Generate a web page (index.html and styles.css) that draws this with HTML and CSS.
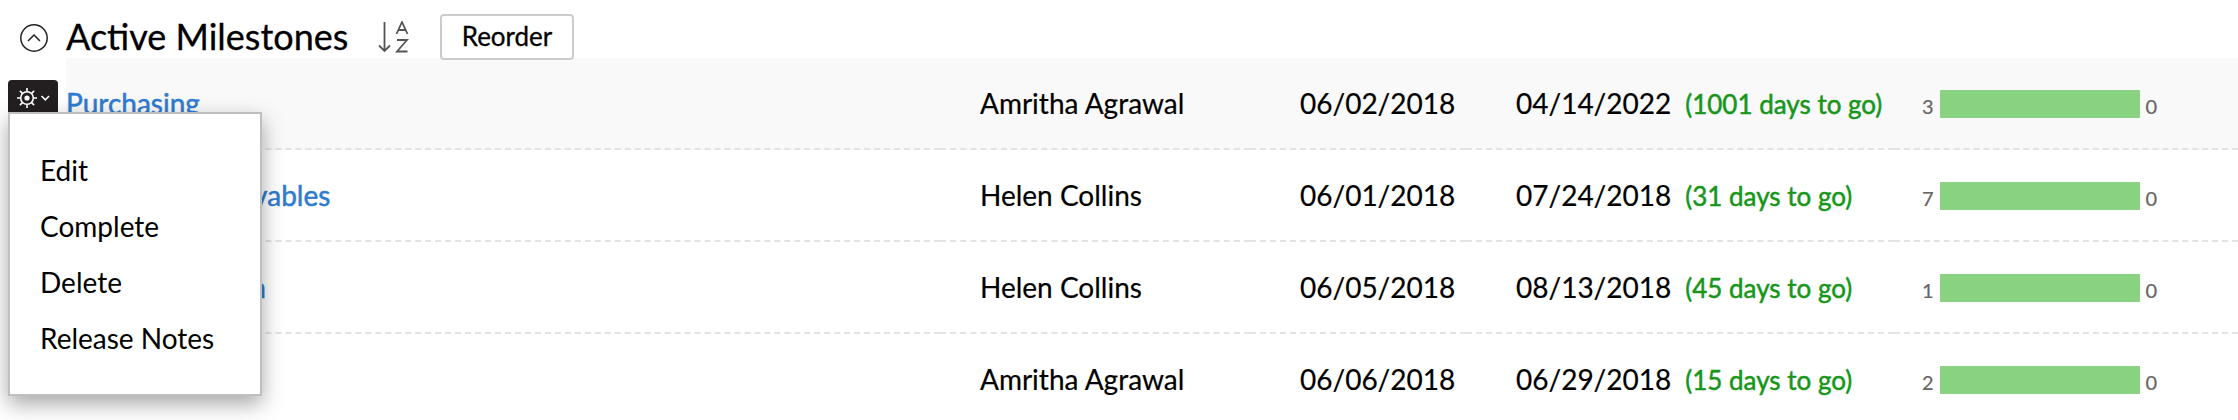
FILE: index.html
```html
<!DOCTYPE html>
<html lang="en">
<head>
    <meta charset="UTF-8">
    <meta name="viewport" content="width=device-width, initial-scale=1.0">
    <title>Milestones</title>
    <link rel="stylesheet" href="styles.css">
</head>
<body>
    <div class="group-header">
        <svg class="toggle" viewBox="0 0 28 28">
            <circle cx="14" cy="14" r="13.2" />
            <path d="M8 17l6-6 6 6" />
        </svg>
        <h2>Active Milestones</h2>
        <svg class="sort" viewBox="0 0 32 32">
            <path d="M6.500 1v29M1 24.500l5.500 5.500 5.500-5.500" />
            <path d="M18.500 13l5.500-12 5.500 12M20.500 9h7M19 19h10l-10 11.500h10.500" />
        </svg>
        <button class="reorder">Reorder</button>
    </div>

    <!-- Milestone list -->
    <div class="milestones">
        <div class="row active">
            <div class="cell name"><a>Purchasing</a></div>
            <div class="cell owner">Amritha Agrawal</div>
            <div class="cell start">06/02/2018</div>
            <div class="cell end">04/14/2022 <span class="left">(1001 days to go)</span></div>
            <div class="cell tasks"><span>3</span><div class="bar"></div><span>0</span></div>
        </div>
        <div class="row">
            <div class="cell name"><a>Accounts Receivables</a></div>
            <div class="cell owner">Helen Collins</div>
            <div class="cell start">06/01/2018</div>
            <div class="cell end">07/24/2018 <span class="left">(31 days to go)</span></div>
            <div class="cell tasks"><span>7</span><div class="bar"></div><span>0</span></div>
        </div>
        <div class="row">
            <div class="cell name"><a class="tight">Order Collection</a></div>
            <div class="cell owner">Helen Collins</div>
            <div class="cell start">06/05/2018</div>
            <div class="cell end">08/13/2018 <span class="left">(45 days to go)</span></div>
            <div class="cell tasks"><span>1</span><div class="bar"></div><span>0</span></div>
        </div>
        <div class="row">
            <div class="cell name"></div>
            <div class="cell owner">Amritha Agrawal</div>
            <div class="cell start">06/06/2018</div>
            <div class="cell end">06/29/2018 <span class="left">(15 days to go)</span></div>
            <div class="cell tasks"><span>2</span><div class="bar"></div><span>0</span></div>
        </div>
    </div>

    <!-- Row actions -->
    <div class="actions">
        <div class="gear-button">
            <svg viewBox="0 0 50 32">
                <circle cx="19" cy="18" r="6.300" />
                <circle class="dot" cx="19" cy="18" r="1.800" />
                <path d="M19 11.500v-3.500M19 24.500v3.500M12.500 18h-3.500M25.500 18h3.500M14.400 13.400l-2.500-2.500M23.600 13.400l2.500-2.500M14.400 22.600l-2.500 2.500M23.600 22.600l2.500 2.500" />
                <path d="M33.500 16l3.800 3.800 3.800-3.800" />
            </svg>
        </div>
        <div class="menu">
            <div class="item">Edit</div>
            <div class="item">Complete</div>
            <div class="item">Delete</div>
            <div class="item">Release Notes</div>
        </div>
    </div>
</body>
</html>
```
FILE: styles.css
```css
body {
    font-family: Lato, sans-serif;
    font-size: 28px;
    margin: 0;
    color: #000;
    background-color: #fff;
    height: 420px;
    overflow: hidden;
    position: relative;
}

.group-header {
    display: flex;
    align-items: flex-start;
    height: 58px;
    padding: 14px 0 0 20px;
    box-sizing: border-box;
    position: relative;
    z-index: 1;
}

.group-header svg,
.gear-button svg {
    fill: none;
    flex: none;
}

.toggle {
    width: 28px;
    height: 28px;
    margin-top: 10px;
    stroke: #222;
    stroke-width: 1.5;
}

h2 {
    font-size: 36px;
    font-weight: 400;
    line-height: 44px;
    width: 282px;
    margin: 0 0 0 18px;
    white-space: nowrap;
    -webkit-text-stroke: 0.3px #000;
}

.sort {
    width: 32px;
    height: 32px;
    margin: 7px 0 0 30px;
    stroke: #555;
    stroke-width: 1.8;
}

.reorder {
    font-family: inherit;
    font-size: 26px;
    line-height: 40px;
    color: #000;
    background: #fff;
    width: 134px;
    height: 46px;
    margin: 0 0 0 30px;
    padding: 0 0 2px;
    border: 2px solid #ccc;
    border-radius: 4px;
    flex: none;
    -webkit-text-stroke: 0.3px #000;
}

.milestones {
    margin-left: 66px;
}

.row {
    display: grid;
    grid-template-columns: 874px 310px 216px 428px 1fr;
    height: 92px;
}

.row.active {
    background-color: #f9f9f9;
}

.cell {
    display: flex;
    align-items: center;
    border-bottom: 2px dashed #e3e3e3;
    white-space: nowrap;
    -webkit-text-stroke: 0.2px currentColor;
}

.row:last-child .cell {
    border-bottom-color: transparent;
}

.name a {
    color: #2f7bd0;
    -webkit-text-stroke: 0.5px #2f7bd0;
}

.name .tight {
    letter-spacing: -0.2px;
}

.owner {
    padding-left: 40px;
}

.start {
    padding-left: 50px;
}

.end {
    padding-left: 50px;
}

.left {
    color: #17961a;
    font-size: 26px;
    margin-left: 14px;
    padding-top: 1px;
    -webkit-text-stroke: 0.5px #17961a;
}

.tasks {
    color: #666;
    font-size: 20px;
    gap: 6px;
    padding: 2px 0 0 28px;
}

.tasks span {
    padding-top: 3px;
}

.bar {
    width: 200px;
    height: 28px;
    background-color: #89d281;
}

.actions {
    position: absolute;
    left: 8px;
    top: 80px;
    z-index: 2;
}

.gear-button {
    width: 50px;
    height: 32px;
    background-color: #231f20;
    border-radius: 4px 4px 0 0;
}

.gear-button svg {
    display: block;
    width: 50px;
    height: 32px;
    stroke: #fff;
    stroke-width: 1.6;
}

.gear-button .dot {
    fill: #fff;
}

.menu {
    width: 254px;
    height: 284px;
    box-sizing: border-box;
    padding: 28px 0 0 30px;
    background-color: #fff;
    border: 2px solid #bfbfbf;
    box-shadow: 0 8px 20px rgba(0, 0, 0, 0.35);
}

.item {
    line-height: 56px;
}
```
